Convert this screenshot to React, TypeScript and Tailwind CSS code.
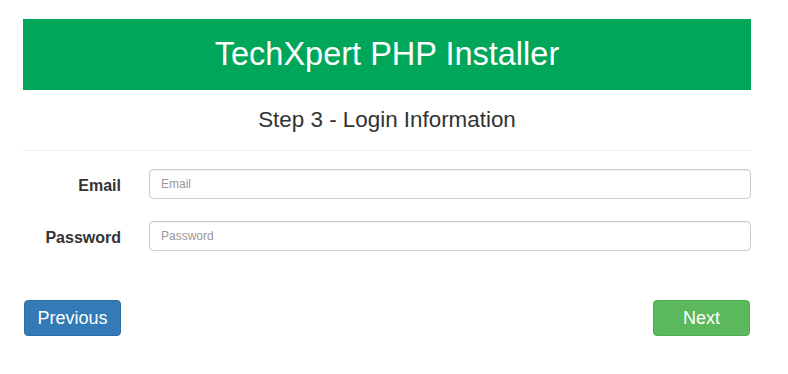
import React from "react";

export default function App() {
  return (
    <div className="w-[788px] h-[374px] bg-white font-['Liberation_Sans',Arial,sans-serif] overflow-hidden">
      <div className="ml-[23px] pt-[19px] w-[728px]">
        <div className="h-[71px] bg-[#00a65a] flex items-center justify-center text-white text-[32.5px] leading-none">
          TechXpert PHP Installer
        </div>
        <div className="h-[60px] flex items-center justify-center text-[22.4px] text-[#333] leading-none">
          Step 3 - Login Information
        </div>
        <div className="border-t border-[#eee]" />
        <form className="mt-[18px] flex flex-col gap-[22px]">
          <div className="flex items-center">
            <label className="w-[98px] text-right font-bold text-[16px] text-[#333] pt-[3px]">Email</label>
            <input
              type="email"
              placeholder="Email"
              className="ml-[28px] flex-1 h-[30px] border border-[#ccc] rounded-[4px] px-[11px] text-[12px] text-[#555] placeholder:text-[#999] outline-none shadow-[inset_0_1px_1px_rgba(0,0,0,0.075)]"
            />
          </div>
          <div className="flex items-center">
            <label className="w-[98px] text-right font-bold text-[16px] text-[#333] pt-[3px]">Password</label>
            <input
              type="password"
              placeholder="Password"
              className="ml-[28px] flex-1 h-[30px] border border-[#ccc] rounded-[4px] px-[11px] text-[12px] text-[#555] placeholder:text-[#999] outline-none shadow-[inset_0_1px_1px_rgba(0,0,0,0.075)]"
            />
          </div>
        </form>
        <div className="mt-[49px] flex justify-between pl-[1px] pr-[1px]">
          <button className="w-[97px] h-[36px] bg-[#337ab7] border border-[#2e6da4] rounded-[4px] text-white text-[18px] leading-none">
            Previous
          </button>
          <button className="w-[97px] h-[36px] bg-[#5cb85c] border border-[#4cae4c] rounded-[4px] text-white text-[18px] leading-none">
            Next
          </button>
        </div>
      </div>
    </div>
  );
}
